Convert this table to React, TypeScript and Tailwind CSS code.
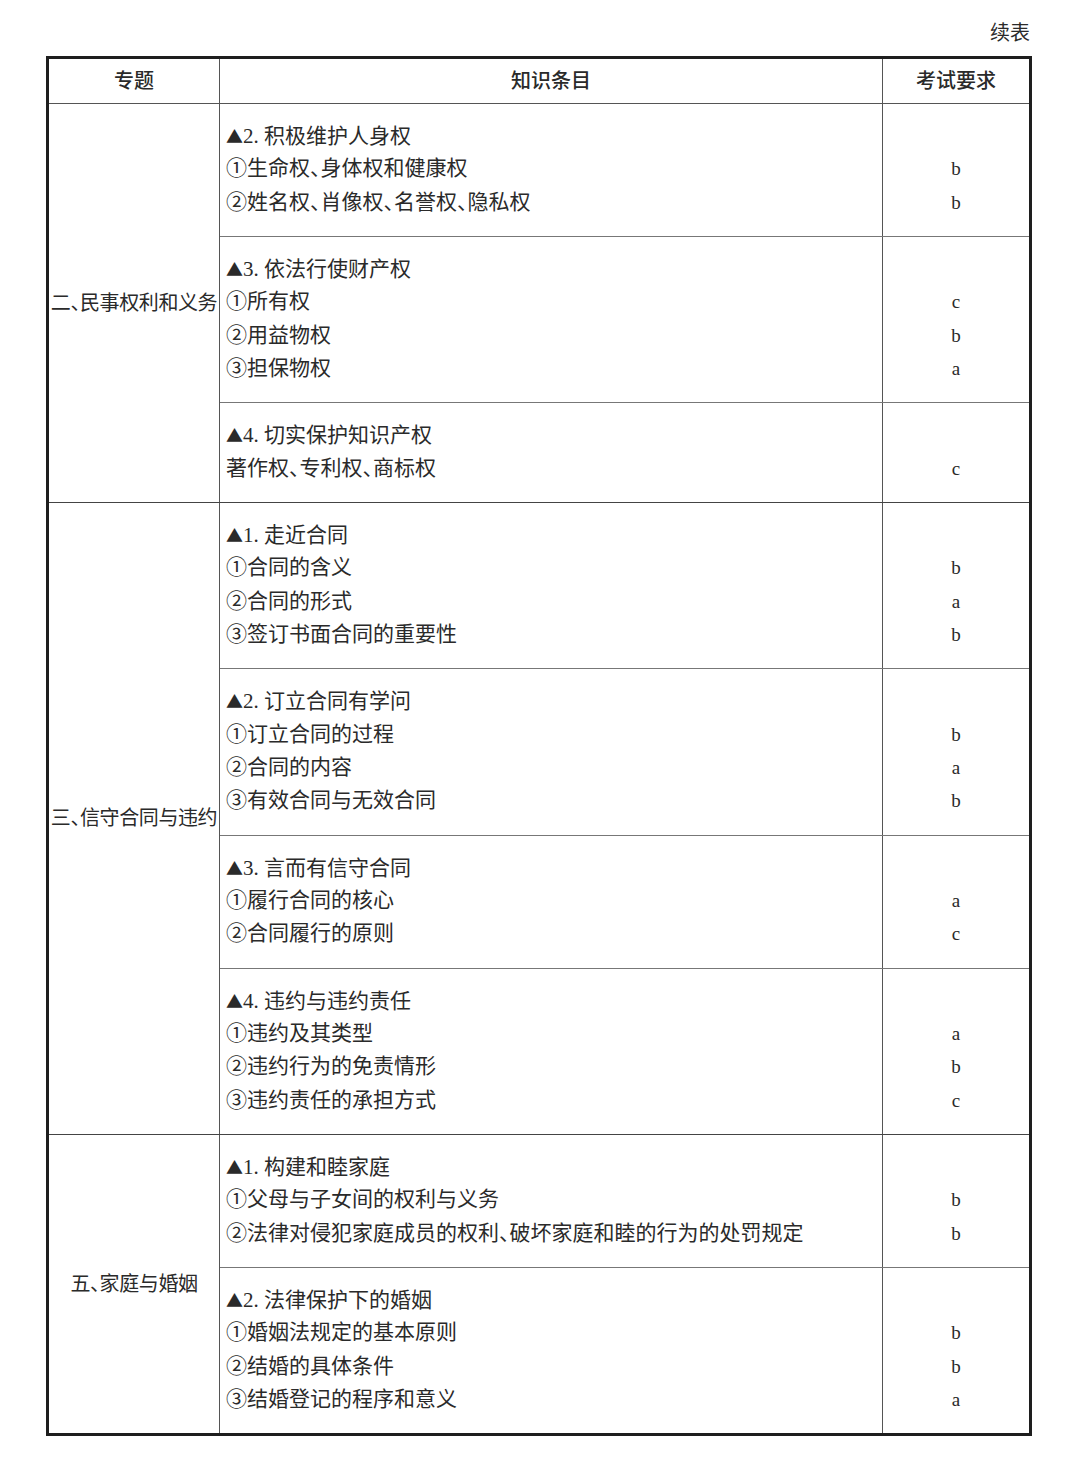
import React from "react";

type Section = {
  num: string;
  title: string;
  items: { text: string; level: string }[];
};

type Group = {
  topic: string;
  sections: Section[];
};

const groups: Group[] = [
  {
    topic: "二、民事权利和义务",
    sections: [
      {
        num: "2.",
        title: "积极维护人身权",
        items: [
          { text: "①生命权、身体权和健康权", level: "b" },
          { text: "②姓名权、肖像权、名誉权、隐私权", level: "b" },
        ],
      },
      {
        num: "3.",
        title: "依法行使财产权",
        items: [
          { text: "①所有权", level: "c" },
          { text: "②用益物权", level: "b" },
          { text: "③担保物权", level: "a" },
        ],
      },
      {
        num: "4.",
        title: "切实保护知识产权",
        items: [{ text: "著作权、专利权、商标权", level: "c" }],
      },
    ],
  },
  {
    topic: "三、信守合同与违约",
    sections: [
      {
        num: "1.",
        title: "走近合同",
        items: [
          { text: "①合同的含义", level: "b" },
          { text: "②合同的形式", level: "a" },
          { text: "③签订书面合同的重要性", level: "b" },
        ],
      },
      {
        num: "2.",
        title: "订立合同有学问",
        items: [
          { text: "①订立合同的过程", level: "b" },
          { text: "②合同的内容", level: "a" },
          { text: "③有效合同与无效合同", level: "b" },
        ],
      },
      {
        num: "3.",
        title: "言而有信守合同",
        items: [
          { text: "①履行合同的核心", level: "a" },
          { text: "②合同履行的原则", level: "c" },
        ],
      },
      {
        num: "4.",
        title: "违约与违约责任",
        items: [
          { text: "①违约及其类型", level: "a" },
          { text: "②违约行为的免责情形", level: "b" },
          { text: "③违约责任的承担方式", level: "c" },
        ],
      },
    ],
  },
  {
    topic: "五、家庭与婚姻",
    sections: [
      {
        num: "1.",
        title: "构建和睦家庭",
        items: [
          { text: "①父母与子女间的权利与义务", level: "b" },
          { text: "②法律对侵犯家庭成员的权利、破坏家庭和睦的行为的处罚规定", level: "b" },
        ],
      },
      {
        num: "2.",
        title: "法律保护下的婚姻",
        items: [
          { text: "①婚姻法规定的基本原则", level: "b" },
          { text: "②结婚的具体条件", level: "b" },
          { text: "③结婚登记的程序和意义", level: "a" },
        ],
      },
    ],
  },
];

const cjk = { fontFamily: '"Noto Sans CJK SC", sans-serif' };

export default function App() {
  return (
    <div
      className="min-h-[1463px] bg-white pt-[20px] text-[#2a2a2a] [font-feature-settings:'halt']"
      style={{ fontFamily: '"Liberation Serif", "Noto Sans CJK SC", serif' }}
    >
      <div className="ml-[46px] w-[986px]">
        <div className="mb-[10px] h-[26px] pr-[2px] text-right text-[20px] leading-[26px]">续表</div>

        <div className="border-[3px] border-[#1e1e1e]">
          {/* Header */}
          <div className="flex h-[45px] border-b border-[#555] text-[20px] font-medium">
            <div className="flex w-[171px] items-center justify-center border-r border-[#555]">专题</div>
            <div className="flex w-[663px] items-center justify-center border-r border-[#555]">知识条目</div>
            <div className="flex flex-1 items-center justify-center">考试要求</div>
          </div>

          {groups.map((group, gi) => (
            <div
              key={group.topic}
              className={`flex ${gi > 0 ? "border-t border-[#444]" : ""}`}
            >
              <div className="flex w-[171px] items-center justify-center whitespace-nowrap border-r border-[#555] text-[20px] tracking-[-0.4px]">
                {group.topic}
              </div>
              <div className="flex flex-1 flex-col">
                {group.sections.map((section, si) => (
                  <div
                    key={section.title}
                    className={`flex ${si > 0 ? "border-t border-[#777]" : ""}`}
                  >
                    <div className="w-[663px] border-r border-[#555] pb-[17px] pl-[6px] pt-[15px] text-[21px] leading-[33.33px]">
                      <div className="h-[33.33px] whitespace-nowrap">
                        <span className="text-[17px]" style={cjk}>▲</span>
                        {section.num} {section.title}
                      </div>
                      {section.items.map((item) => (
                        <div key={item.text} className="h-[33.33px] whitespace-nowrap">
                          {item.text}
                        </div>
                      ))}
                    </div>
                    <div className="flex-1 pb-[17px] pt-[15px] text-center text-[19px] leading-[33.33px]">
                      <div className="h-[33.33px]">&nbsp;</div>
                      {section.items.map((item) => (
                        <div key={item.text} className="h-[33.33px]">
                          {item.level}
                        </div>
                      ))}
                    </div>
                  </div>
                ))}
              </div>
            </div>
          ))}
        </div>
      </div>
    </div>
  );
}
